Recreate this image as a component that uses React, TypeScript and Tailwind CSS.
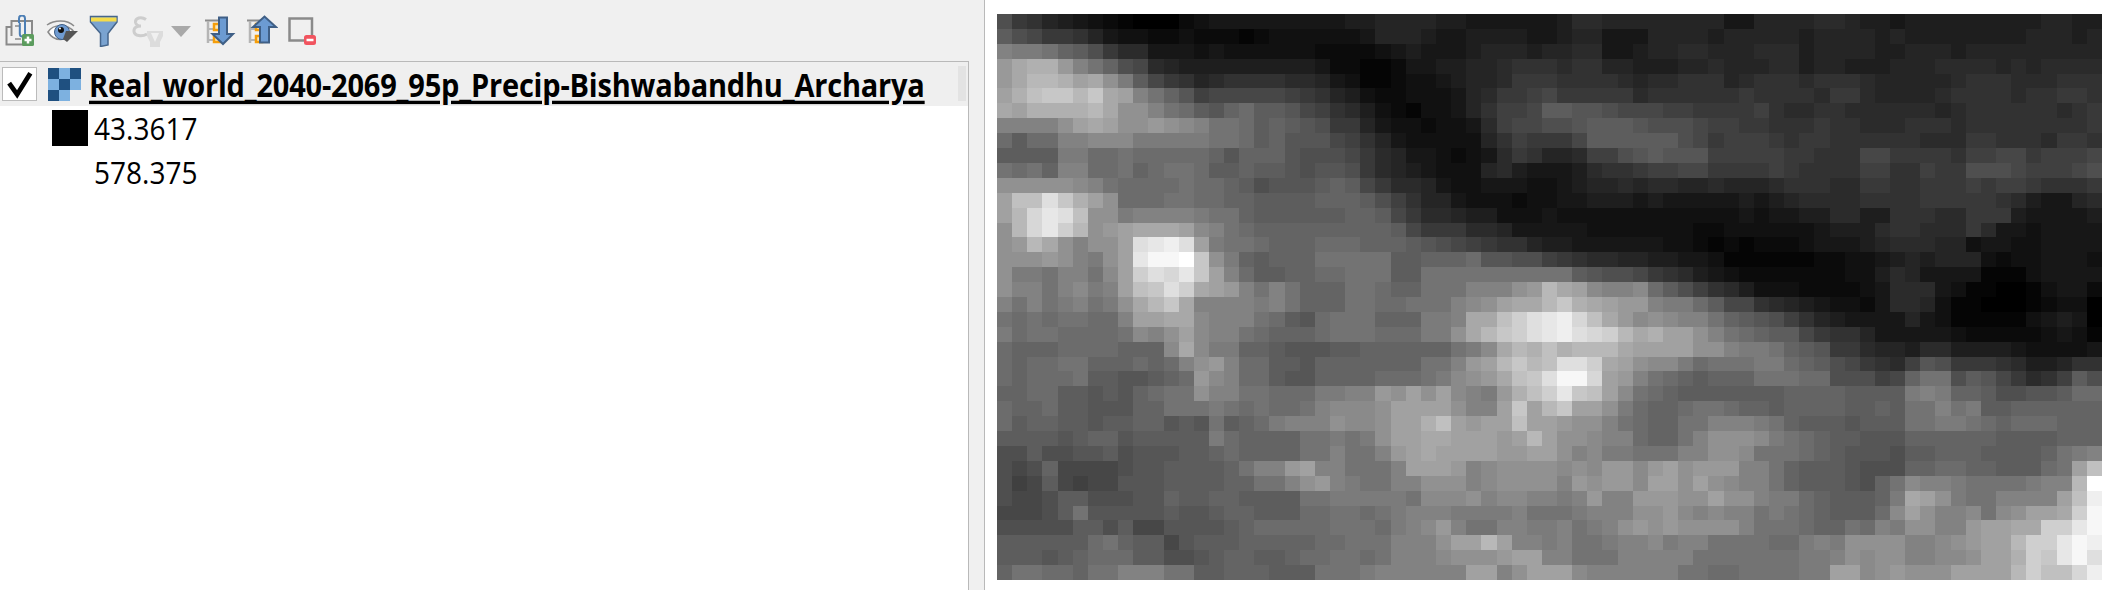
import React from "react";

// raster values, base 36, one char per cell (0 = black, z = white)
const RASTER = [
  "c98654 321000 234444 444445 566665 544444 4 577666 666664 466667 765545 555555 556655",
  "ecb998 643322 322212 333333 466654 455554 4 566444 666656 666656 666565 555555 566656",
  "jiihfe c97744 434333 333222 234544 456665 6 677445 667766 677756 666556 665666 666666",
  "moppmj hfcb76 555555 555422 112445 566788 8 788665 556676 667756 655566 677776 767777",
  "moqqpn olieb9 867888 877643 112334 566799 9 888876 778886 788878 887666 667888 777888",
  "nprssq sonjhf dabbbb ba9865 322333 46799a b 999997 888888 988887 997666 678888 788998",
  "onpppp qolljh gedfge edba87 532133 468aab e eddcbb baa999 9a8778 877777 767888 888789",
  "jjjjln onllml kjhhge fedc99 643323 347abb c cdeeed cccbaa 998889 887778 887888 888889",
  "geggjj kkkiii iihhge fdddba 864333 3368a9 9 9beeee eecb9a aa9899 888888 777998 887998",
  "eeeeii gghggg ggfdff fdcccb 976443 234798 6 67aacd edddaa aaa998 88bb99 998aab b9aaab",
  "hghfjj gghfgh hgeefe edcddc 976543 336754 4 457889 aabb99 99a988 88aa88 a99ccc baaabc",
  "lllllk jhgggg hggfec dddefe b97764 334443 3 456676 776676 667888 779988 999a9a a98889",
  "nrrvsp nlgggh hggffe eeefff eca866 433323 3 445554 544444 545677 778888 999998 754467",
  "nquwvr llijjj jihhfe eeeeef feb977 655333 4 333333 333333 434455 775588 877999 544445",
  "lquwtq lmnooo nkjhgf ffffff ffeb99 977644 4 443333 333223 333334 555788 777974 434444",
  "lmqolj llnvwx vnihhg fffggg fffedc ba9886 5 544444 433212 122234 445677 766344 334444",
  "lllmlj ilnwyy zslife fffhhh hheeff fgddcc a 987766 554431 111112 233456 566632 334443",
  "liihjj hkntvu wsnjge effggh hheehh hhhhhh h hedccb 987543 222222 233576 444411 134444",
  "ljjhjk ijnrsv tonmjh jhfffh hgffhh hjjjlm q onkjjk geca87 533322 223477 743110 013442",
  "jhjhij hiloqs ojjjji jhfffh hgghhh jklnoo q sponmm jiigeb b87654 332477 631100 012330",
  "hghghh ggjnno okjjjh gedghh hfffii joortv w xuromk lkjjhf edca86 544446 431111 134540",
  "ighhgg gghkjl nkjjhg fffghh hgggii loqstv w xvutqo pnnljh gfeeb9 886444 443222 223431",
  "gfffgg ggfffk okiiff edddee ffffff hikoqp r pqqqon nnnllj iihfed 997665 775555 433334",
  "gfgghh fffgfg jlmjgg eedfff ffffhh jmnqsq r vvtonl kkighh hiigfe cb987a dc9998 755688",
  "gfgggh eeddef gmkjgg eddfff fggghi klmors v yyunmj hgfeff fhhhgg cccabf hhcedb 978aec",
  "ffggee dedfgh hljjhh gggiij jmlnln kjimpr t wsrnkh gfeeee eeefff feeeei jiffec cddegg",
  "gffgee dddffh hhihgh gghjkk klnnnn ljjnsn q snnlig ffghhg ffefff feefeh hjhiee ffffff",
  "geffee deeffd edhefg ijjjlk klnnpr nmnnrn n mlljhg ffhhjj jihfee edeeeh hiihgf gggfff",
  "eeeede ffdeee eeigff ffhhih ilnnoo nnnmnq n llkjjg ffhjll lkihgf eedddf fffffe eeefff",
  "cceccd decddd eefgff ffhhjh hjmnon nnnmmn n ljkiih hhjjll khhhgf edddce efffee eefhij",
  "cbcfbb bbcdde eeefhj jmnjjh hhjnnn mjklll l klkmmk mnlmmm jjhfee edcccf fggffe eeghnr",
  "cabeba bbddde eeeffh hjlmji hhjjll ljklll l jmlmmk nnlnlk jjhfee edcfhk jjihhh hijjqz",
  "cbbcee cccddf eeffee eehhii iiihkk kljkkj j ijmjjm mmllnl ljiigf eeefio nlihhj jjjnrx",
  "bbbceh ddddde ddeffe eegghh ghijjj iiiijh h hijjjl lmkjkj jhihgf eeegkn ljjkhk lnnoty",
  "ccccce ecebbd dddefg gggghh hgijkm jhhjji i jhijlm lmllll jhhhgf fhgjil ljjmnn oottwy",
  "eeeeee ghfeeb deeeff fffggh hhjjjl nnqnjj i jhhijj kijjhh hhggij illllj jklmnn qttwyx",
  "eeedef gggeec cdeffe efgghh ghjjjk lllmnn j jhhhjj jjjhhh hhhhii jlkllj jkklnn ptswyv",
  "fhhggf hhjjjh heefff eeehhh ijjjjj jnnjln n nkjjjj jjhhgg hhhhii nnklml llnnnn qtrrux",
].map((row) => row.replace(/ /g, ""));

const COLS = 73;
const ROWS = 38;

const Raster = () => {
  const cells: React.ReactNode[] = [];
  for (let y = 0; y < ROWS; y++) {
    const row = RASTER[y];
    for (let x = 0; x < COLS; x++) {
      const v = parseInt(row[x] ?? row[row.length - 1], 36);
      const g = Math.round(255 * Math.pow(v / 35, 1.1));
      cells.push(<rect key={`${x}-${y}`} x={x} y={y} width={1.02} height={1.02} fill={`rgb(${g},${g},${g})`} />);
    }
  }
  return (
    <svg className="block w-[1105px] h-[566px]" viewBox={`0 0 ${COLS} ${ROWS}`} preserveAspectRatio="none" shapeRendering="crispEdges">
      {cells}
    </svg>
  );
};

const AddGroupIcon = () => (
  <svg className="w-8 h-8 shrink-0" viewBox="0 0 32 32" fill="none">
    <path d="M7.5 21V6H28v19H18" stroke="#8a8a8a" strokeWidth="2" />
    <path d="M7 12H2.5v17.5H22" stroke="#8a8a8a" strokeWidth="2" />
    <path d="M11 11h5M11 24h6" stroke="#8a8a8a" strokeWidth="1.5" />
    <path d="M15 8V3.5a3 3 0 0 1 6 0V19a2.6 2.6 0 0 1-5.2 0V8" stroke="#4d7fb5" strokeWidth="2" />
    <rect x="18" y="19" width="12" height="12" rx="1.5" fill="#5c9c5e" />
    <path d="M24 21.5v7M20.5 25h7" stroke="#fff" strokeWidth="2.5" />
  </svg>
);

const EyeIcon = () => (
  <svg className="w-8 h-8 shrink-0" viewBox="0 0 32 32" fill="none">
    <path d="M1 10C8 5 21 4 28 11" stroke="#8a8a8a" strokeWidth="1.5" />
    <path d="M2 17C7 9 21 8 28 17C21 27 8 27 2 17Z" fill="#fff" stroke="#8a8a8a" strokeWidth="1.5" />
    <circle cx="16" cy="17" r="7.5" fill="#6f9bd1" stroke="#3f5f86" />
    <circle cx="15" cy="15" r="3" fill="#111" />
    <circle cx="14" cy="13.5" r="1" fill="#fff" />
    <path d="M20 16H32L21 27L17 24Z" fill="#555" />
  </svg>
);

const FilterIcon = () => (
  <svg className="w-8 h-8 shrink-0" viewBox="0 0 32 32">
    <path d="M2.5 1.5H29V7L20 18.5V30L12.5 31.5V18.5L2.5 7Z" fill="#7aa3d0" stroke="#46668c" strokeWidth="1.5" />
    <rect x="3" y="2.5" width="25.5" height="4" fill="#f5dc4a" />
  </svg>
);

const ExpressionFilterIcon = () => (
  <svg className="w-8 h-8 shrink-0" viewBox="0 0 32 32" fill="none">
    <path d="M15 4.5C10 1 4 3 4.5 7.5C5 10 8 11 10 11C6 11 2.5 12.5 3 16.5C3.5 21 11 22 16 19" stroke="#cdcdcd" strokeWidth="3" />
    <path d="M16 16H32V21L29 27V32H19V27L16 21Z" fill="#dcdcdc" />
    <path d="M20 18L24 27L28 18Z" fill="#f0f0f0" />
  </svg>
);

const DropTriangle = () => (
  <svg className="w-[26px] h-8 shrink-0" viewBox="0 0 26 32">
    <path d="M3 11H23L13 22Z" fill="#a9a9a9" />
  </svg>
);

const TreeGlyph = () => (
  <g>
    <path d="M1 5.5H21" stroke="#8c8c8c" strokeWidth="2" />
    <path d="M4 6V28" stroke="#b5b5b5" strokeWidth="2.5" />
    <path d="M5 14H10M5 25H10" stroke="#b5b5b5" strokeWidth="2" />
    <rect x="10" y="9" width="6" height="6" fill="#fbe9b8" stroke="#f59e0b" strokeWidth="2.5" />
    <rect x="10" y="21" width="6" height="6" fill="#fbe9b8" stroke="#f59e0b" strokeWidth="2.5" />
  </g>
);

const ExpandIcon = () => (
  <svg className="w-8 h-8 shrink-0" viewBox="0 0 32 32">
    <TreeGlyph />
    <path d="M15 2.5H23V19H29L19 29L8.5 19H15Z" fill="#6c9bd2" stroke="#3f5f86" strokeWidth="2" />
  </svg>
);

const CollapseIcon = () => (
  <svg className="w-8 h-8 shrink-0" viewBox="0 0 32 32">
    <TreeGlyph />
    <path d="M14 27.5H23V12H30L18.5 1.5L7 12H14Z" fill="#6c9bd2" stroke="#3f5f86" strokeWidth="2" />
  </svg>
);

const RemoveIcon = () => (
  <svg className="w-8 h-8 shrink-0" viewBox="0 0 32 32" fill="none">
    <rect x="1.5" y="3.5" width="22.5" height="22" stroke="#8a8a8a" strokeWidth="2.5" />
    <rect x="16" y="20" width="12" height="10" rx="2.5" fill="#f1545f" />
    <path d="M18.5 25H25.5" stroke="#fff" strokeWidth="2.5" />
  </svg>
);

const CheckIcon = () => (
  <svg className="w-[35px] h-[34px]" viewBox="0 0 35 34" fill="none">
    <path d="M6.5 16L15 28L29 5.5" stroke="#000" strokeWidth="5" />
  </svg>
);

const RasterLayerIcon = () => (
  <svg className="w-[33px] h-[33px] shrink-0" viewBox="0 0 3 3" shapeRendering="crispEdges">
    <rect x="0" y="0" width="1" height="1" fill="#1f5080" />
    <rect x="1" y="0" width="1" height="1" fill="#7db1e0" />
    <rect x="2" y="0" width="1" height="1" fill="#1f5080" />
    <rect x="0" y="1" width="1" height="1" fill="#7db1e0" />
    <rect x="1" y="1" width="1" height="1" fill="#1f5080" />
    <rect x="2" y="1" width="1" height="1" fill="#7db1e0" />
    <rect x="0" y="2" width="1" height="1" fill="#1f5080" />
    <rect x="1" y="2" width="1" height="1" fill="#7db1e0" />
  </svg>
);

export default function App() {
  return (
    <div className="flex w-[2116px] h-[590px] overflow-hidden bg-white text-black font-['Open_Sans',sans-serif]">
      <div className="flex flex-col w-[985px] shrink-0 bg-[#f0f0f0] border-r border-[#b9b9b9]">
        <div className="flex h-[61px] pt-[15px] pl-1 shrink-0">
          <AddGroupIcon />
          <div className="ml-[10px]"><EyeIcon /></div>
          <div className="ml-[10px]"><FilterIcon /></div>
          <div className="ml-[11px]"><ExpressionFilterIcon /></div>
          <div className="ml-[5px]"><DropTriangle /></div>
          <div className="ml-[10px]"><ExpandIcon /></div>
          <div className="ml-[10px]"><CollapseIcon /></div>
          <div className="ml-[10px]"><RemoveIcon /></div>
        </div>
        <div className="flex flex-col flex-1 w-[969px] bg-white border-t border-r border-[#b9b9b9]">
          <div className="relative flex items-center h-[44px] pl-[2px] bg-[#efefef]">
            <div className="flex items-center justify-center w-[35px] h-[34px] bg-white border border-[#bbbbbb]">
              <CheckIcon />
            </div>
            <div className="ml-[11px]"><RasterLayerIcon /></div>
            <span className="ml-[8px] text-[29px] leading-none font-bold tracking-[-0.2px] underline decoration-[3px] underline-offset-[3px] whitespace-nowrap scale-y-[1.12]">
              Real_world_2040-2069_95p_Precip-Bishwabandhu_Archarya
            </span>
            <div className="absolute right-[2px] top-[4px] w-[8px] h-[35px] bg-[#e3e3e3]" />
          </div>
          <div className="flex items-center h-[44px] pl-[52px]">
            <div className="w-[36px] h-[36px] bg-black shrink-0" />
            <span className="ml-[6px] text-[28px] leading-none scale-y-[1.1]">43.3617</span>
          </div>
          <div className="flex items-center h-[44px] pl-[94px]">
            <span className="text-[28px] leading-none scale-y-[1.1]">578.375</span>
          </div>
        </div>
      </div>
      <div className="pl-[12px] pt-[14px]">
        <Raster />
      </div>
    </div>
  );
}
